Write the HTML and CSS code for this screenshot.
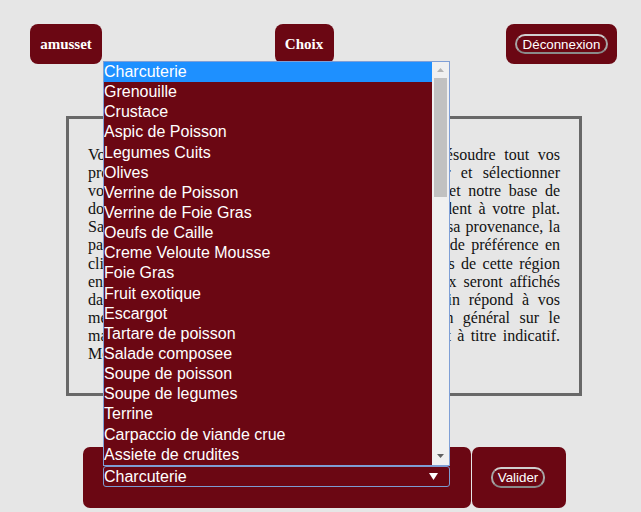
FILE: index.html
```html
<!DOCTYPE html>
<html lang="fr">
<head>
<meta charset="utf-8">
<title>Choix du plat</title>
<link rel="stylesheet" href="styles.css">
</head>
<body>
<header class="topbar">
  <div class="tab user">amusset</div>
  <div class="tab title">Choix</div>
  <div class="tab logout"><button class="btn btn-logout" type="button">Déconnexion</button></div>
</header>

<main class="intro">
  <p class="text">
    <span class="line">Vous ne savez pas quel vin choisir ? Ce site va résoudre tout vos</span>
    <span class="line">problèmes de mets et vins. Il suffit de rechercher et sélectionner</span>
    <span class="line">votre plat dans la liste déroulante située ci-dessous, et notre base de</span>
    <span class="line">données vous proposera alors des vins qui correspondent à votre plat.</span>
    <span class="line">Sachant que chaque vin est notamment caractérisé par sa provenance, la</span>
    <span class="line">partie droite de l'écran vous indique aussi les régions de préférence en</span>
    <span class="line">cliquant sur l'une des régions de la carte, tous les vins de cette région</span>
    <span class="line">en accord avec le plat choisi ainsi que tous leurs prix seront affichés</span>
    <span class="line">dans le tableau ci-contre. Vous pourrez voir quel vin répond à vos</span>
    <span class="line">meilleures attentes. Les prix sont ceux constatés en général sur le</span>
    <span class="line">marché des vins en France et sont donnés uniquement à titre indicatif.</span>
    <span class="line last">Merci de votre visite et bonne dégustation !</span>
  </p>
</main>

<footer class="actions">
  <div class="panel select-panel">
    <div class="select">
      <div class="popup">
        <ul class="options">
          <li class="active">Charcuterie</li>
          <li>Grenouille</li>
          <li>Crustace</li>
          <li>Aspic de Poisson</li>
          <li>Legumes Cuits</li>
          <li>Olives</li>
          <li>Verrine de Poisson</li>
          <li>Verrine de Foie Gras</li>
          <li>Oeufs de Caille</li>
          <li>Creme Veloute Mousse</li>
          <li>Foie Gras</li>
          <li>Fruit exotique</li>
          <li>Escargot</li>
          <li>Tartare de poisson</li>
          <li>Salade composee</li>
          <li>Soupe de poisson</li>
          <li>Soupe de legumes</li>
          <li>Terrine</li>
          <li>Carpaccio de viande crue</li>
          <li>Assiete de crudites</li>
        </ul>
        <div class="scrollbar">
          <svg class="sb-arrow sb-up" width="7" height="4" viewBox="0 0 7 4"><polygon points="0,4 7,4 3.5,0"/></svg>
          <div class="sb-thumb"></div>
          <svg class="sb-arrow sb-down" width="7" height="4" viewBox="0 0 7 4"><polygon points="0,0 7,0 3.5,4"/></svg>
        </div>
      </div>
      <span class="select-value">Charcuterie</span>
      <svg class="select-arrow" width="9" height="7" viewBox="0 0 9 7"><polygon points="0,0 9,0 4.5,7"/></svg>
    </div>
  </div>
  <div class="panel submit-panel">
    <button class="btn btn-submit" type="button">Valider</button>
  </div>
</footer>
</body>
</html>
```

FILE: styles.css
```css
* {
  box-sizing: border-box;
}

html {
  background: #e6e6e6;
}

body {
  margin: 8px 8px 0;
  font-family: "Liberation Serif", "Times New Roman", serif;
  color: #111;
}

/* ---------- top bar ---------- */
.topbar {
  display: flex;
  justify-content: space-between;
  padding: 16px 16px 0 22px;
}

.tab {
  height: 40px;
  display: flex;
  align-items: center;
  justify-content: center;
  background: #6b0713;
  border-radius: 8px;
  color: #fff;
  font: bold 15px "Liberation Serif", "Times New Roman", serif;
}

.user {
  width: 72px;
}

.title {
  width: 59px;
}

.logout {
  width: 111px;
}

.btn {
  display: flex;
  align-items: center;
  justify-content: center;
  padding: 0;
  background: #6b0713;
  color: #fff;
  font: 13.33px "Liberation Sans", Arial, sans-serif;
  border: 2px solid;
  border-color: #cfcfcf #a6a6a6 #8a8a8a #a6a6a6;
  border-radius: 10px;
}

.btn-logout {
  width: 93px;
  height: 20px;
}

.btn-submit {
  width: 54px;
  height: 21px;
}

/* ---------- intro text ---------- */
.intro {
  margin: 52px 0 0 58px;
  width: 516px;
  height: 280px;
  border: 3px solid #686868;
  padding: 27px 19px 0;
}

.text {
  margin: 0;
  font-size: 16px;
  line-height: 18.1px;
}

.line {
  display: block;
  text-align: justify;
  text-align-last: justify;
}

.line.last {
  text-align: left;
  text-align-last: left;
}

/* ---------- bottom actions ---------- */
.actions {
  display: flex;
  gap: 1px;
  margin: 51px 0 0 75px;
}

.panel {
  height: 61px;
  background: #6b0713;
  border-radius: 7px;
}

.select-panel {
  width: 388px;
  padding: 19px 0 0 20px;
}

.submit-panel {
  width: 94px;
  padding: 20px 0 0 19px;
}

.select {
  position: relative;
  width: 347px;
  height: 21px;
  display: flex;
  align-items: center;
  border: 1px solid #7d9bd0;
  border-radius: 3px;
  background: #6b0713;
  color: #fff;
  font: 16px "Liberation Sans", Arial, sans-serif;
}

.select-value {
  flex: 1;
}

.select-arrow {
  fill: #fff;
  margin-right: 11px;
  margin-bottom: 1px;
}

/* ---------- open dropdown ---------- */
.popup {
  position: absolute;
  left: -1px;
  bottom: calc(100% + 1px);
  width: 347px;
  height: 405px;
  display: flex;
  border: 1px solid #7f9fd6;
  background: #6b0713;
}

.options {
  flex: 1;
  margin: 0;
  padding: 0;
  list-style: none;
  overflow: hidden;
}

.options li {
  height: 20.15px;
  line-height: 20.15px;
  white-space: nowrap;
  color: #fff;
}

.options li.active {
  background: #1e90ff;
}

.scrollbar {
  width: 17px;
  display: flex;
  flex-direction: column;
  align-items: center;
  background: #f0f0f0;
}

.sb-arrow {
  flex: none;
}

.sb-up {
  margin-top: 6px;
  fill: #b4b4b4;
}

.sb-thumb {
  width: 13px;
  height: 119px;
  margin-top: 6px;
  background: #c1c1c1;
}

.sb-down {
  margin-top: auto;
  margin-bottom: 7px;
  fill: #606060;
}
```
